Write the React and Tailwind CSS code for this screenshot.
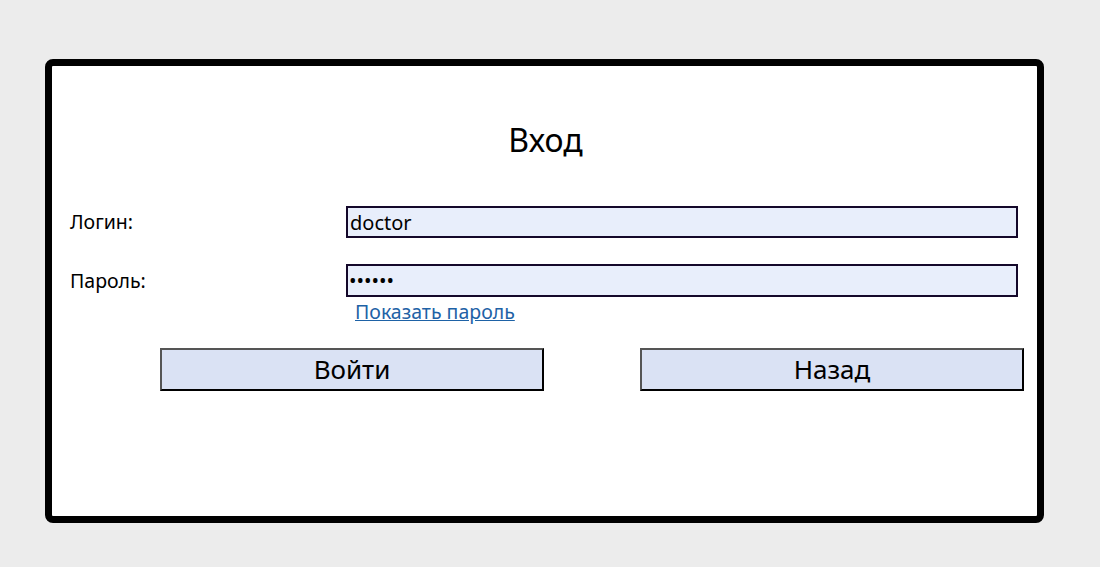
export default function App() {
  return (
    <div className="min-h-[567px] w-[1100px] bg-[#ececec] pt-[59px] pl-[45px]" style={{ fontFamily: '"Noto Sans", "Open Sans", sans-serif' }}>
      <div className="w-[999px] h-[464px] border-[7px] border-black rounded-[8px] bg-white flex flex-col">
        <h1 className="mt-[54px] text-center text-[32px] leading-[40px] text-black pl-[2px]">Вход</h1>

        <div className="mt-[46px] flex items-center pl-[18px]">
          <label className="w-[276px] text-[19.5px] text-black">Логин:</label>
          <input
            type="text"
            defaultValue="doctor"
            className="w-[672px] h-[32px] border-2 border-[#14082a] bg-[#e8eefb] px-[2px] text-[20px] text-black outline-none"
          />
        </div>

        <div className="mt-[26px] flex items-center pl-[18px]">
          <label className="w-[276px] text-[19.5px] text-black">Пароль:</label>
          <input
            type="password"
            defaultValue="123456"
            className="w-[672px] h-[33px] border-2 border-[#14082a] bg-[#e8eefb] px-[1px] text-[20px] text-black outline-none"
          />
        </div>

        <div className="pl-[303px] mt-[2px]">
          <a href="#" className="text-[19.5px] leading-[26px] text-[#1e62a6] underline">Показать пароль</a>
        </div>

        <div className="mt-[23px] flex pl-[108px] gap-[96px]">
          <button className="w-[384px] h-[43px] bg-[#dae2f4] border-2 border-t-[#555] border-l-[#555] border-b-black border-r-black text-[26px] text-black">Войти</button>
          <button className="w-[384px] h-[43px] bg-[#dae2f4] border-2 border-t-[#555] border-l-[#555] border-b-black border-r-black text-[26px] text-black">Назад</button>
        </div>
      </div>
    </div>
  );
}
